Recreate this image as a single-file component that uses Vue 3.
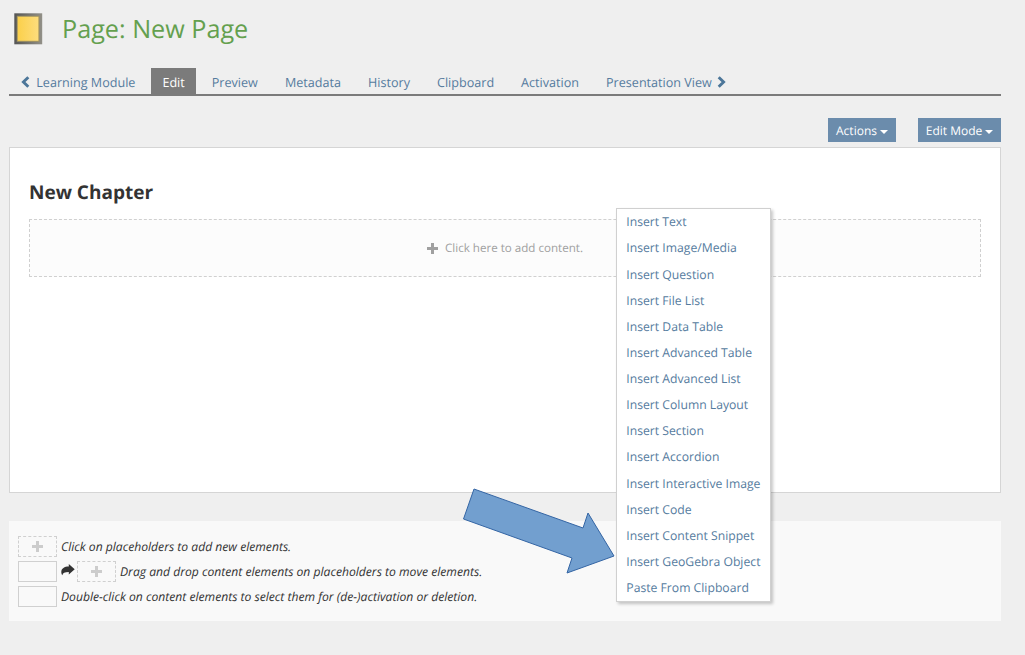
<script setup>
const tabs = ['Edit', 'Preview', 'Metadata', 'History', 'Clipboard', 'Activation']
const inserts = [
  'Insert Text', 'Insert Image/Media', 'Insert Question', 'Insert File List', 'Insert Data Table',
  'Insert Advanced Table', 'Insert Advanced List', 'Insert Column Layout', 'Insert Section',
  'Insert Accordion', 'Insert Interactive Image', 'Insert Code', 'Insert Content Snippet',
  'Insert GeoGebra Object', 'Paste From Clipboard',
]
</script>

<template>
  <div class="page">
    <header class="head">
      <svg class="logo" width="30" height="33" viewBox="0 0 30 33">
        <defs>
          <linearGradient id="frame" x1="0" x2="1"><stop offset="0" stop-color="#555" /><stop offset="1" stop-color="#929087" /></linearGradient>
          <linearGradient id="sheet" x1="0" x2="1"><stop offset="0" stop-color="#fbd04b" /><stop offset="1" stop-color="#fddd7c" /></linearGradient>
        </defs>
        <rect x="0.3" y="0.3" width="27.9" height="31" fill="url(#frame)" />
        <rect x="2.8" y="2.8" width="22.6" height="26" fill="#a39560" />
        <rect x="3.8" y="3.8" width="20.6" height="24" fill="url(#sheet)" />
      </svg>
      <h1>Page: New Page</h1>
    </header>

    <nav class="tabs">
      <a class="tab first">
        <svg class="chev" width="9" height="12" viewBox="0 0 9 12"><path d="M7.3 1.2 2.4 6l4.9 4.8" fill="none" stroke="#4c7699" stroke-width="2.9" /></svg>
        <span>Learning Module</span>
      </a>
      <a v-for="(t, i) in tabs" :key="t" class="tab" :class="{ active: i === 0 }">{{ t }}</a>
      <a class="tab last">
        <span>Presentation View</span>
        <svg class="chev" width="9" height="12" viewBox="0 0 9 12"><path d="M1.7 1.2 6.6 6l-4.9 4.8" fill="none" stroke="#4c7699" stroke-width="2.9" /></svg>
      </a>
    </nav>

    <div class="toolbar">
      <button class="btn actions">Actions<i class="caret"></i></button>
      <button class="btn mode">Edit Mode<i class="caret"></i></button>
    </div>

    <main class="sheet">
      <h2>New Chapter</h2>
      <div class="drop">
        <svg width="11" height="11" viewBox="0 0 11 11"><path d="M5.5 0v11M0 5.5h11" stroke="#a0a0a0" stroke-width="3" /></svg>
        <span>Click here to add content.</span>
      </div>
    </main>

    <section class="help">
      <div class="row">
        <span class="box dashed"><svg width="11" height="11" viewBox="0 0 11 11"><path d="M5.5 0v11M0 5.5h11" stroke="#ccc" stroke-width="3" /></svg></span>
        <em>Click on placeholders to add new elements.</em>
      </div>
      <div class="row">
        <span class="box"></span>
        <svg class="share" width="14" height="12" viewBox="0 0 14 12"><path d="M7.8 0v2.6C3.4 2.6.3 4.6.3 8c0 1.5.5 2.5 1.1 3.3C1.6 8.9 3.7 8 7.8 8v2.6l5.9-5.3z" fill="#333" /></svg>
        <span class="box dashed"><svg width="11" height="11" viewBox="0 0 11 11"><path d="M5.5 0v11M0 5.5h11" stroke="#ccc" stroke-width="3" /></svg></span>
        <em>Drag and drop content elements on placeholders to move elements.</em>
      </div>
      <div class="row">
        <span class="box"></span>
        <em>Double-click on content elements to select them for (de-)activation or deletion.</em>
      </div>
    </section>

    <ul class="menu">
      <li v-for="m in inserts" :key="m">{{ m }}</li>
    </ul>

    <svg class="arrow" width="156" height="90" viewBox="0 0 156 90">
      <path d="M12 3 121 42 126 27 152 70 105 87 110 72 1.5 33z" transform="translate(1 0)" fill="#729fcf" stroke="#3465a4" stroke-width="1" />
    </svg>
  </div>
</template>

<style>
body { margin: 0; background: #efefef; }
</style>

<style scoped>
.page {
  position: relative;
  box-sizing: border-box;
  width: 1025px;
  height: 655px;
  padding: 0 24px 0 9px;
  overflow: hidden;
  background: #efefef;
  color: #333;
  font: 12.6px/20px "Open Sans", "Noto Sans", sans-serif;
  text-rendering: geometricPrecision;
}
.head { display: flex; height: 67px; box-sizing: border-box; padding: 13px 0 0 5px; }
.logo { flex: none; }
h1 { margin: 0 0 0 18px; font-size: 25.2px; line-height: 32px; font-weight: 400; color: #64a04e; white-space: nowrap; }
.tabs { display: flex; gap: 4px; height: 29px; box-sizing: border-box; padding-top: 1px; border-bottom: 2px solid #7b7b7b; color: #557b9e; }
.tab { display: flex; align-items: center; height: 26px; box-sizing: border-box; padding: 3px 11.5px 0; white-space: nowrap; }
.tab.active { background: #7b7b7b; color: #fff; }
.first { gap: 6px; padding-left: 12.3px; }
.first .chev, .last .chev { margin-top: -1px; }
.last { gap: 5px; }
.toolbar { display: flex; justify-content: flex-end; gap: 22px; height: 51px; box-sizing: border-box; padding-top: 22px; }
.btn { display: flex; align-items: center; justify-content: center; gap: 3px; height: 24px; padding: 1px 0 0; border: 0; background: #6b8cac; color: #fff; font: 12px/23px "Open Sans", sans-serif; white-space: nowrap; text-rendering: geometricPrecision; }
.actions { width: 68px; }
.mode { width: 83px; }
.caret { margin-top: 2px; border: 4px solid transparent; border-top-color: #fff; border-bottom: 0; }
.sheet { box-sizing: border-box; height: 346px; padding: 31px 19px 0; background: #fff; border: 1px solid #d5d5d5; }
h2 { margin: 0; font-size: 19px; line-height: 26px; font-weight: 700; }
.drop { display: flex; align-items: center; justify-content: center; gap: 7px; box-sizing: border-box; height: 58px; margin-top: 14px; border: 1px dashed #d0d0d0; background: #fcfcfc; color: #a0a0a0; font-size: 11.6px; }
.drop span { padding-top: 2px; }
.help { display: flex; flex-direction: column; gap: 4px; box-sizing: border-box; height: 100px; margin-top: 28px; padding: 15px 0 0 9px; background: #f9f9f9; font-size: 12.13px; }
.row { display: flex; align-items: center; height: 21px; gap: 4px; white-space: nowrap; }
.box { display: flex; align-items: center; justify-content: center; flex: none; box-sizing: border-box; width: 39px; height: 21px; border: 1px solid #d0d0d0; }
.dashed { border-style: dashed; }
.share { margin: -3px -2px 0 0; }
.menu { position: absolute; left: 616px; top: 208px; box-sizing: border-box; width: 155px; height: 394px; margin: 0; padding: .3px 0 0 9.3px; list-style: none; background: #fff; border: 1px solid #d0d0d0; box-shadow: 2px 2px 3px rgba(0, 0, 0, .22); color: #557b9e; font-size: 12.2px; white-space: nowrap; }
.menu li { height: 26.13px; line-height: 26px; }
.arrow { position: absolute; left: 461px; top: 486px; }
</style>
